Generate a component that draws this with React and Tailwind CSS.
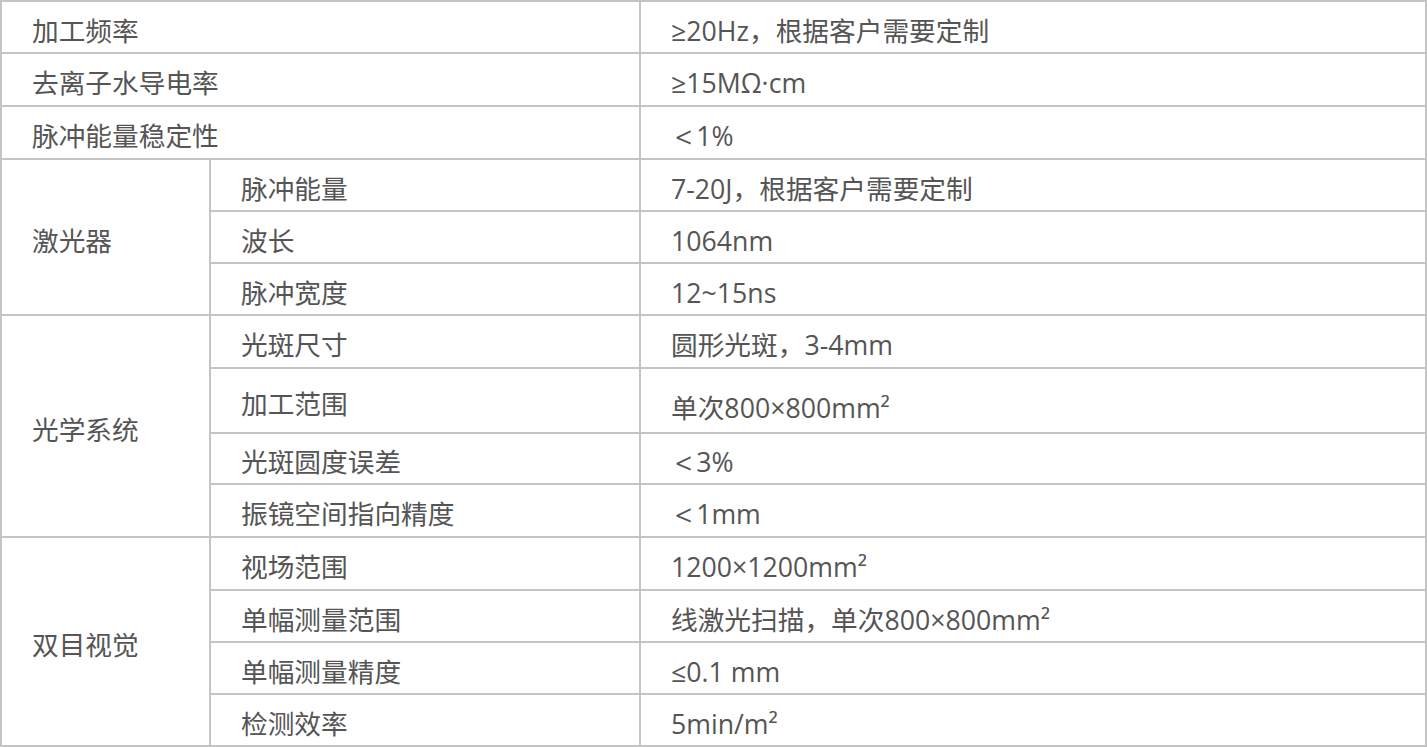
import React from "react";

const font = { fontFamily: '"Open Sans","Noto Sans CJK SC",sans-serif' };

const Lt = ({ rest }) => (
  <>
    <span className="ml-[4px] mr-[4px] text-[30px] leading-none">&lt;</span>
    {rest}
  </>
);

const rows = [
  { group: null, label: "加工频率", value: "≥20Hz，根据客户需要定制" },
  { group: null, label: "去离子水导电率", value: "≥15MΩ·cm" },
  { group: null, label: "脉冲能量稳定性", value: <Lt rest="1%" /> },
  { group: "激光器", span: 3, label: "脉冲能量", value: "7-20J，根据客户需要定制" },
  { label: "波长", value: "1064nm" },
  { label: "脉冲宽度", value: "12~15ns" },
  { group: "光学系统", span: 4, label: "光斑尺寸", value: "圆形光斑，3-4mm" },
  { label: "加工范围", value: "单次800×800mm²", extra: true },
  { label: "光斑圆度误差", value: <Lt rest="3%" /> },
  { label: "振镜空间指向精度", value: <Lt rest="1mm" /> },
  { group: "双目视觉", span: 4, label: "视场范围", value: "1200×1200mm²" },
  { label: "单幅测量范围", value: "线激光扫描，单次800×800mm²" },
  { label: "单幅测量精度", value: "≤0.1 mm" },
  { label: "检测效率", value: "5min/m²" },
];

const cell = "flex items-center pl-[30px] pt-[8px] border-r-2 border-b-2 border-[#c4c4c4] whitespace-nowrap";

export default function App() {
  return (
    <div className="w-[1427px] h-[747px] bg-white overflow-hidden" style={font}>
      <div className="w-[1427px] grid grid-cols-[209px_430px_786px] grid-rows-[52px_53px_53px_52px_52px_52px_53px_65px_51px_53px_53px_52px_52px_52px] border-t-2 border-l-2 border-[#c4c4c4] text-[26.7px] text-[#555555] leading-none">
        {rows.map((r, i) => {
          const out = [];
          if (r.group === null) {
            out.push(
              <div key={i + "a"} className={cell + " col-span-2"}>{r.label}</div>
            );
          } else {
            if (r.group) {
              out.push(
                <div
                  key={i + "g"}
                  className={cell + (r.span === 3 ? " row-span-3" : " row-span-4")}
                >
                  {r.group}
                </div>
              );
            }
            out.push(
              <div key={i + "l"} className={cell}>{r.label}</div>
            );
          }
          out.push(
            <div key={i + "v"} className={r.extra ? cell.replace("pt-[8px]", "pt-[16px]") : cell}>
              {r.value}
            </div>
          );
          return out;
        })}
      </div>
    </div>
  );
}
